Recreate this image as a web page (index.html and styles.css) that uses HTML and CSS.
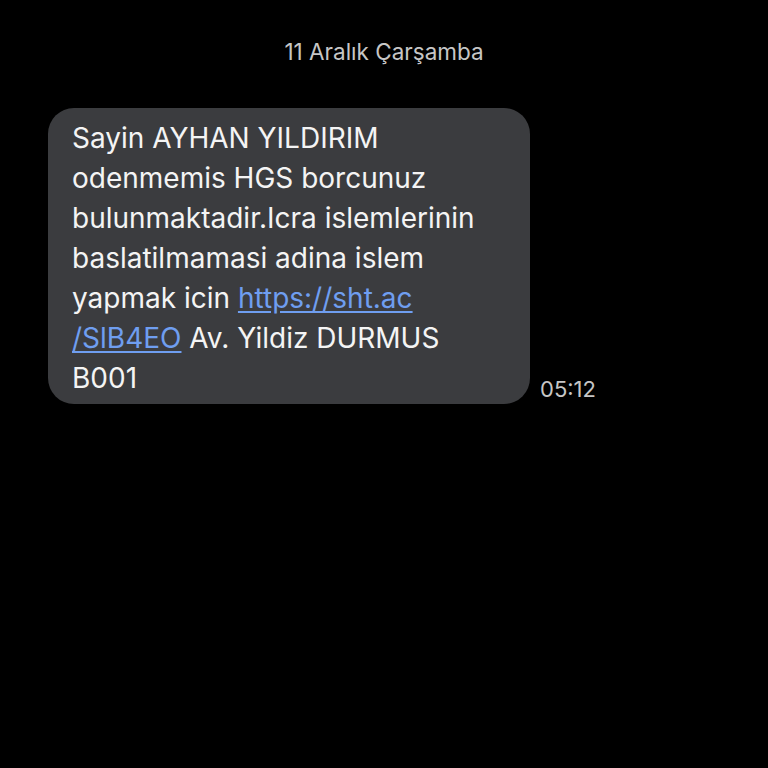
FILE: index.html
```html
<!DOCTYPE html>
<html lang="tr">
<head>
    <meta charset="UTF-8">
    <meta name="viewport" content="width=device-width, initial-scale=1.0">
    <title>Mesajlar</title>
    <link rel="stylesheet" href="styles.css">
</head>
<body>
    <div class="chat">
        <div class="date-divider">11 Aralık Çarşamba</div>

        <div class="message-row">
            <div class="bubble">
                Sayin AYHAN YILDIRIM<br>
                odenmemis HGS borcunuz<br>
                bulunmaktadir.Icra islemlerinin<br>
                baslatilmamasi adina islem<br>
                yapmak icin <a class="link" href="#">https://sht.ac<br>/SlB4EO</a> Av. Yildiz DURMUS<br>
                B001
            </div>
            <div class="time">05:12</div>
        </div>
    </div>
</body>
</html>
```

FILE: styles.css
```css
* {
    box-sizing: border-box;
    margin: 0;
    padding: 0;
}

html, body {
    background: #000;
    height: 100%;
}

body {
    font-family: Inter, Roboto, 'Noto Sans', sans-serif;
    color: #f2f2f2;
}

.chat {
    padding: 37px 0 0 48px;
}

.date-divider {
    text-align: center;
    color: #c6c6c6;
    font-size: 22.5px;
    line-height: 30px;
    margin-left: -48px;
    margin-bottom: 41px;
}

.message-row {
    display: flex;
    align-items: flex-end;
    gap: 10px;
}

.bubble {
    width: 482px;
    background: #3b3c3f;
    border-radius: 26px;
    padding: 10px 20px 6px 24px;
    font-size: 28px;
    line-height: 40px;
    color: #f4f4f4;
}

.link {
    color: #6f9ef0;
    text-decoration: underline;
    text-underline-offset: 3px;
}

.time {
    color: #c6c6c6;
    font-size: 22px;
    line-height: 26px;
    margin-bottom: 2px;
}
```
